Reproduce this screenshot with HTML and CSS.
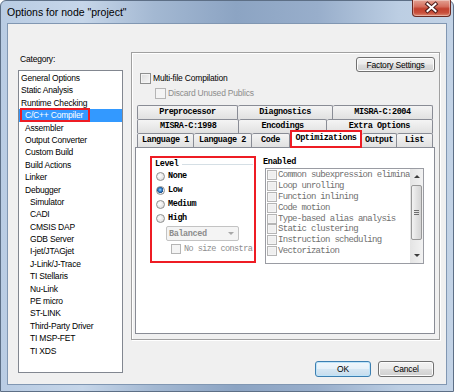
FILE: index.html
```html
<!doctype html>
<html>
<head>
<title>Options for node "project"</title>
<link rel="stylesheet" href="styles.css">
</head>
<body>
<div class="window">
    <div class="titlebar">
        <span class="title">Options for node "project"</span>
        <span class="close">
            <svg width="39" height="17" viewBox="0 0 39 17">
                <path d="M15.5 5 L23.5 12 M23.5 5 L15.5 12" stroke="#4a1a18" stroke-width="4" stroke-linecap="square"/>
                <path d="M15.5 5 L23.5 12 M23.5 5 L15.5 12" stroke="#fff" stroke-width="2" stroke-linecap="square"/>
            </svg>
        </span>
    </div>
    <div class="client">
        <div class="main">
            <div class="category">
                <div class="cat-label">Category:</div>
                <ul class="cat-list">
                    <li class="l1">General Options</li>
                    <li class="l1">Static Analysis</li>
                    <li class="l1">Runtime Checking</li>
                    <li class="l2 selected"><span class="hl">C/C++ Compiler</span></li>
                    <li class="l2">Assembler</li>
                    <li class="l2">Output Converter</li>
                    <li class="l2">Custom Build</li>
                    <li class="l2">Build Actions</li>
                    <li class="l2">Linker</li>
                    <li class="l2">Debugger</li>
                    <li class="l3">Simulator</li>
                    <li class="l3">CADI</li>
                    <li class="l3">CMSIS DAP</li>
                    <li class="l3">GDB Server</li>
                    <li class="l3">I-jet/JTAGjet</li>
                    <li class="l3">J-Link/J-Trace</li>
                    <li class="l3">TI Stellaris</li>
                    <li class="l3">Nu-Link</li>
                    <li class="l3">PE micro</li>
                    <li class="l3">ST-LINK</li>
                    <li class="l3">Third-Party Driver</li>
                    <li class="l3">TI MSP-FET</li>
                    <li class="l3">TI XDS</li>
                </ul>
            </div>
            <div class="right">
                <div class="panel">
                    <div class="factory-row"><button class="btn factory">Factory Settings</button></div>
                    <div class="check multi"><span class="box"></span>Multi-file Compilation</div>
                    <div class="check discard disabled"><span class="box"></span>Discard Unused Publics</div>
                    <div class="tabs">
                        <div class="tab-row">
                            <span class="tab">Preprocessor</span>
                            <span class="tab">Diagnostics</span>
                            <span class="tab">MISRA-C:2004</span>
                        </div>
                        <div class="tab-row">
                            <span class="tab">MISRA-C:1998</span>
                            <span class="tab">Encodings</span>
                            <span class="tab">Extra Options</span>
                        </div>
                        <div class="tab-row fixed">
                            <span class="tab t-lang1">Language 1</span>
                            <span class="tab t-lang2">Language 2</span>
                            <span class="tab t-code">Code</span>
                            <span class="tab t-opt active">Optimizations</span>
                            <span class="tab t-out">Output</span>
                            <span class="tab t-list">List</span>
                        </div>
                    </div>
                    <div class="tab-page">
                        <div class="level">
                            <div class="level-title"><span>Level</span><span class="group-line"></span></div>
                            <div class="radio"><span class="dot"></span>None</div>
                            <div class="radio"><span class="dot checked"></span>Low</div>
                            <div class="radio"><span class="dot"></span>Medium</div>
                            <div class="radio"><span class="dot"></span>High</div>
                            <div class="combo"><span>Balanced</span><span class="combo-arrow"></span></div>
                            <div class="check nosize disabled"><span class="box"></span>No size constra</div>
                        </div>
                        <div class="enabled">
                            <div class="enabled-label">Enabled</div>
                            <div class="listbox">
                                <ul class="opt-list">
                                    <li><span class="box"></span>Common subexpression elimina</li>
                                    <li><span class="box"></span>Loop unrolling</li>
                                    <li><span class="box"></span>Function inlining</li>
                                    <li><span class="box"></span>Code motion</li>
                                    <li><span class="box"></span>Type-based alias analysis</li>
                                    <li><span class="box"></span>Static clustering</li>
                                    <li><span class="box"></span>Instruction scheduling</li>
                                    <li><span class="box"></span>Vectorization</li>
                                </ul>
                                <div class="scrollbar">
                                    <span class="sb-btn"><span class="arrow-up"></span></span>
                                    <span class="sb-thumb"><span class="grip"></span></span>
                                    <span class="sb-track"></span>
                                    <span class="sb-btn"><span class="arrow-down"></span></span>
                                </div>
                            </div>
                        </div>
                    </div>
                </div>
                <div class="actions">
                    <button class="btn default">OK</button>
                    <button class="btn">Cancel</button>
                </div>
            </div>
        </div>
    </div>
</div>
</body>
</html>
```

FILE: styles.css
```css
*
{
    box-sizing:border-box;
}
html, body
{
    margin:0;
    padding:0;
}
body
{
    width:454px;
    height:392px;
    overflow:hidden;
    background:#fff;
    color:#000;
    font-family:"Liberation Sans", Arial, sans-serif;
    font-size:8.5px;
    letter-spacing:-0.2px;
}

/* window frame */
.window
{
    width:454px;
    height:392px;
    display:flex;
    flex-direction:column;
    padding:0 6px 6px 6px;
    border:1px solid #5d6f86;
    border-radius:6px 6px 0 0;
    background:linear-gradient(90deg, #b9cce3 0%, #c6d6e9 18%, #a3b8d2 34%, #8ca4c3 52%, #98aecb 70%, #bccee3 88%, #c3d3e6 100%);
}
.titlebar
{
    height:22px;
    display:flex;
    justify-content:space-between;
    align-items:flex-start;
}
.title
{
    font-size:10.5px;
    letter-spacing:0;
    line-height:23px;
}
.close
{
    width:39px;
    height:17px;
    margin:-1px -4px 0 0;
    border:1px solid #6b2a22;
    border-top:none;
    border-radius:0 0 4px 4px;
    background:linear-gradient(#e3a293 0%, #d5705f 40%, #c2412e 55%, #c9503c 80%, #dc8a74 100%);
    box-shadow:inset 0 0 0 1px rgba(255,255,255,0.35);
}
.close svg
{
    display:block;
    margin:-1px 0 0 -1px;
}
.client
{
    flex:1;
    background:#f0f0f0;
    border:1px solid #8197b2;
}
.main
{
    display:flex;
    padding:28px 6px 0 10px;
}

/* category tree */
.category
{
    width:105px;
}
.cat-label
{
    height:14px;
    line-height:14px;
    padding-left:2px;
    margin-bottom:4px;
}
.cat-list
{
    list-style:none;
    margin:0;
    padding:1px 0 0 0;
    height:303px;
    border:1px solid #828790;
    background:#fff;
}
.cat-list li
{
    height:12.4px;
    line-height:12.4px;
    white-space:nowrap;
}
.l1 {padding-left:2px;}
.l2 {padding-left:6px;}
.l3 {padding-left:11px;}
.cat-list li.selected
{
    display:flex;
    align-items:center;
    background:#3399ff;
    color:#fff;
}
.hl
{
    height:14px;
    line-height:10px;
    margin-left:-5px;
    padding:0 5px 0 3px;
    border:2px solid #ee1c24;
}

/* right side */
.right
{
    width:309px;
    margin-left:8px;
    display:flex;
    flex-direction:column;
}
.panel
{
    height:288px;
    display:flex;
    flex-direction:column;
    padding-bottom:5px;
    border:1px solid #a0a0a0;
    box-shadow:1px 1px 0 #fff, inset 1px 1px 0 #fff;
}
.factory-row
{
    display:flex;
    justify-content:flex-end;
    margin-top:4px;
    padding-right:4px;
}
.btn
{
    height:15px;
    padding:0;
    border:1px solid #707070;
    border-radius:3px;
    background:linear-gradient(#f2f2f2 0%, #ebebeb 48%, #dddddd 52%, #cfcfcf 100%);
    box-shadow:inset 0 0 0 1px #fcfcfc;
    font-family:"Liberation Sans", Arial, sans-serif;
    font-size:8.5px;
    letter-spacing:-0.2px;
    color:#000;
}
.factory
{
    width:79px;
}

/* checkboxes */
.check
{
    display:flex;
    align-items:center;
    height:12px;
    white-space:nowrap;
}
.box
{
    flex:none;
    width:11px;
    height:11px;
    margin-right:2px;
    border:1px solid #8e8f8f;
    background:linear-gradient(135deg, #dcdcdc, #f7f7f7);
    box-shadow:inset 0 0 0 1px #f4f4f4;
}
.multi
{
    margin-left:8px;
}
.discard
{
    margin:3px 0 0 23px;
}
.disabled
{
    color:#8d8d8d;
}
.disabled .box
{
    border-color:#b5b5b5;
    background:#f4f4f4;
}

/* tabs */
.tabs
{
    margin:6px 6px 0 5px;
}
.tab-row
{
    display:flex;
    align-items:flex-end;
    height:14px;
}
.tab
{
    flex:1 1 auto;
    height:14px;
    padding:0 3px;
    border:1px solid #898c95;
    border-left:none;
    border-bottom:none;
    border-radius:2px 2px 0 0;
    background:linear-gradient(#f4f4f4, #e1e1e1);
    font-family:"Liberation Mono", monospace;
    font-weight:bold;
    font-size:8.5px;
    letter-spacing:-0.4px;
    line-height:13px;
    text-align:center;
    white-space:nowrap;
}
.tab:first-child
{
    border-left:1px solid #898c95;
}
.fixed .tab
{
    flex:none;
}
.t-lang1 {width:57px;}
.t-lang2 {width:58px;}
.t-code {width:38px;}
.t-opt {width:72px;}
.t-out {width:35px;}
.t-list {width:36px;}
.tab.active
{
    position:relative;
    z-index:1;
    height:18px;
    margin-bottom:-1px;
    border:2px solid #ee1c24;
    border-radius:0;
    background:#fff;
    line-height:12px;
}
.tab-page
{
    flex:1;
    display:flex;
    align-items:flex-start;
    gap:9px;
    margin:0 4px 0 3px;
    padding:8px 0 0 14px;
    border:1px solid #898c95;
    background:#fff;
    font-family:"Liberation Mono", monospace;
    font-size:8.5px;
    letter-spacing:-0.4px;
}

/* level group */
.level
{
    width:106px;
    height:107px;
    border:2px solid #ee1c24;
    overflow:hidden;
}
.level-title
{
    display:flex;
    align-items:center;
    height:11px;
    padding-left:3px;
    font-weight:bold;
}
.group-line
{
    flex:1;
    margin:1px 1px 0 3px;
    border-top:1px solid #d5dfe5;
}
.radio
{
    display:flex;
    align-items:center;
    height:14px;
    padding-left:4px;
    font-weight:bold;
}
.dot
{
    width:9px;
    height:9px;
    margin-right:3px;
    border:1px solid #8e8f8f;
    border-radius:50%;
    background:radial-gradient(circle at 40% 40%, #ffffff, #d6d6d6);
}
.dot.checked
{
    background:radial-gradient(circle at 45% 40%, #a9dcff 0, #3d8ad3 1.5px, #1a4f8c 3px, #f2f2f2 3.3px, #d6d6d6 100%);
}
.combo
{
    display:flex;
    justify-content:space-between;
    align-items:center;
    width:73px;
    height:15px;
    margin:1px 0 0 14px;
    padding:0 4px 0 2px;
    border:1px solid #c3c3c3;
    border-radius:2px;
    background:#f4f4f4;
    color:#8d8d8d;
    font-weight:bold;
}
.combo-arrow
{
    width:0;
    height:0;
    border-left:3px solid transparent;
    border-right:3px solid transparent;
    border-top:3px solid #a8a8a8;
}
.nosize
{
    height:10px;
    margin:3px 0 0 19px;
    letter-spacing:-0.55px;
}
.nosize .box
{
    width:10px;
    height:10px;
    margin-right:3px;
}

/* enabled list */
.enabled
{
    width:159px;
}
.enabled-label
{
    height:12px;
    line-height:12px;
    margin-left:-2px;
    font-weight:bold;
}
.listbox
{
    display:flex;
    height:96px;
    border:1px solid #9a9ca3;
    background:#fff;
}
.opt-list
{
    flex:1;
    min-width:0;
    list-style:none;
    margin:0;
    padding:1px 0 0 1px;
    overflow:hidden;
}
.opt-list li
{
    display:flex;
    align-items:center;
    height:10.8px;
    white-space:nowrap;
    color:#707070;
    font-size:9px;
    letter-spacing:-0.7px;
}
.opt-list .box
{
    width:10px;
    height:10px;
    margin-right:1px;
    border-color:#b5b5b5;
    background:#efefef;
}
.scrollbar
{
    width:13px;
    display:flex;
    flex-direction:column;
    background:linear-gradient(90deg, #e4e4e4, #f2f2f2);
}
.sb-btn
{
    height:15px;
    display:flex;
    justify-content:center;
    align-items:center;
}
.arrow-up, .arrow-down
{
    width:0;
    height:0;
    border-left:3px solid transparent;
    border-right:3px solid transparent;
}
.arrow-up {border-bottom:3px solid #3d3d3d;}
.arrow-down {border-top:3px solid #3d3d3d;}
.sb-thumb
{
    height:55px;
    margin:1px 1px 0 1px;
    display:flex;
    justify-content:center;
    align-items:center;
    border:1px solid #989898;
    border-radius:2px;
    background:linear-gradient(90deg, #f3f3f3, #e2e2e2 50%, #d4d4d4);
}
.grip
{
    width:5px;
    height:5px;
    background:repeating-linear-gradient(#6f6f6f 0 1px, transparent 1px 2px);
}
.sb-track
{
    flex:1;
}

/* dialog buttons */
.actions
{
    display:flex;
    justify-content:flex-end;
    gap:7px;
    margin-top:21px;
    padding-right:6px;
}
.actions .btn
{
    width:56px;
    height:16px;
}
.actions .btn.default
{
    border-color:#3c7fb1;
    box-shadow:inset 0 0 0 1px #bfe4f9;
    background:linear-gradient(#f0f7fc 0%, #e6f1f9 48%, #d6e7f3 52%, #c6dced 100%);
}
```
